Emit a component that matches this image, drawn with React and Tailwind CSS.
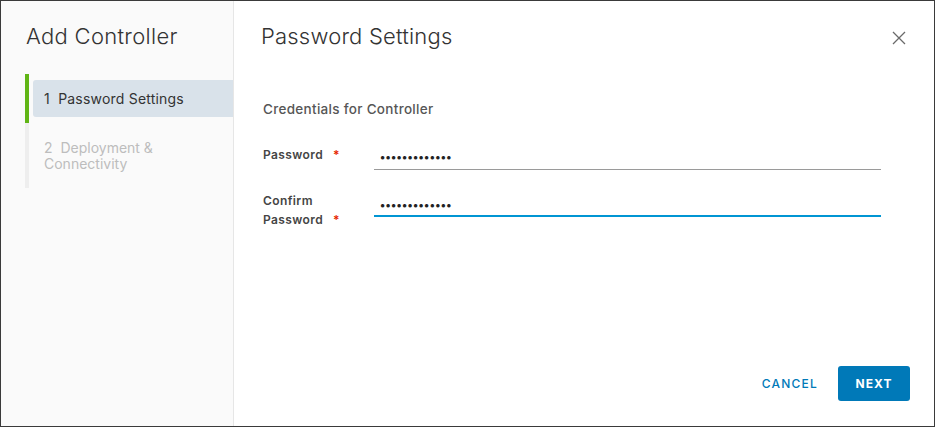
export default function App() {
  const font = { fontFamily: "Inter, 'Noto Sans', sans-serif" };
  return (
    <div style={font} className="w-[935px] h-[427px] border border-[#3a3a3a] bg-white flex overflow-hidden">
      {/* Sidebar */}
      <div className="w-[233px] shrink-0 bg-[#fafafa] border-r border-[#e6e6e6] flex flex-col pl-[24px] pt-[21px]">
        <div className="text-[22px] font-light text-[#333] leading-[28px] tracking-[0.3px] pl-[1px]">Add Controller</div>
        <div className="mt-[24px] flex">
          <div className="flex flex-col w-[4px] shrink-0">
            <div className="h-[49px] bg-[#60b515]"></div>
            <div className="h-[65px] bg-[#eeeeee]"></div>
          </div>
          <div className="flex flex-col flex-1 pl-[4px] pt-[6px]">
            <div className="h-[37px] bg-[#d9e2ea] rounded-l-[3px] flex items-center pl-[11px] text-[14px] tracking-[0.2px] text-[#333]">
              1&nbsp;&nbsp;Password Settings
            </div>
            <div className="pl-[11px] pt-[23px] text-[14px] leading-[16px] text-[#bdbdbd]">
              <div>2&nbsp;&nbsp;Deployment &amp;</div>
              <div>Connectivity</div>
            </div>
          </div>
        </div>
      </div>
      {/* Main */}
      <div className="flex-1 flex flex-col pl-[27px] pr-[24px]">
        <div className="flex items-start justify-between pt-[21px]">
          <div className="text-[22px] font-light text-[#333] leading-[28px] tracking-[0.2px]">Password Settings</div>
          <svg width="14" height="14" viewBox="0 0 14 14" className="mt-[9px] mr-[4px]">
            <path d="M1 1 L13 13 M13 1 L1 13" stroke="#6a6a6a" strokeWidth="1.3" />
          </svg>
        </div>
        <div className="mt-[49px] pl-[2px] text-[13.5px] tracking-[0.3px] font-medium text-[#565656]">Credentials for Controller</div>
        <div className="mt-[26px] flex items-start pl-[2px] pr-[29px]">
          <div className="w-[111px] shrink-0 text-[12px] font-semibold text-[#454545] leading-[19px] tracking-[0.4px]">
            Password<span className="text-[#e62700] ml-[10px]">*</span>
          </div>
          <div className="flex-1 border-b border-[#9a9a9a] h-[25px] pt-[3px] pl-[6px] text-[11px] text-[#222] tracking-[0.3px] font-bold leading-[18px]">
            •••••••••••••
          </div>
        </div>
        <div className="mt-[21px] flex items-start pl-[2px] pr-[29px]">
          <div className="w-[111px] shrink-0 text-[12px] font-semibold text-[#454545] leading-[19px] tracking-[0.4px]">
            <div>Confirm</div>
            <div>Password<span className="text-[#e62700] ml-[10px]">*</span></div>
          </div>
          <div className="flex-1 border-b-2 border-[#0095d3] h-[26px] pt-[5px] pl-[6px] text-[11px] text-[#222] tracking-[0.3px] font-bold leading-[18px]">
            •••••••••••••
          </div>
        </div>
        <div className="flex-1"></div>
        <div className="flex items-center justify-end pb-[25px] gap-[20px]">
          <div className="text-[12px] font-medium tracking-[1.2px] text-[#0079b8]">CANCEL</div>
          <div className="w-[72px] h-[35px] rounded-[3px] bg-[#0079b8] flex items-center justify-center text-[12px] font-bold tracking-[1px] text-white">NEXT</div>
        </div>
      </div>
    </div>
  );
}
